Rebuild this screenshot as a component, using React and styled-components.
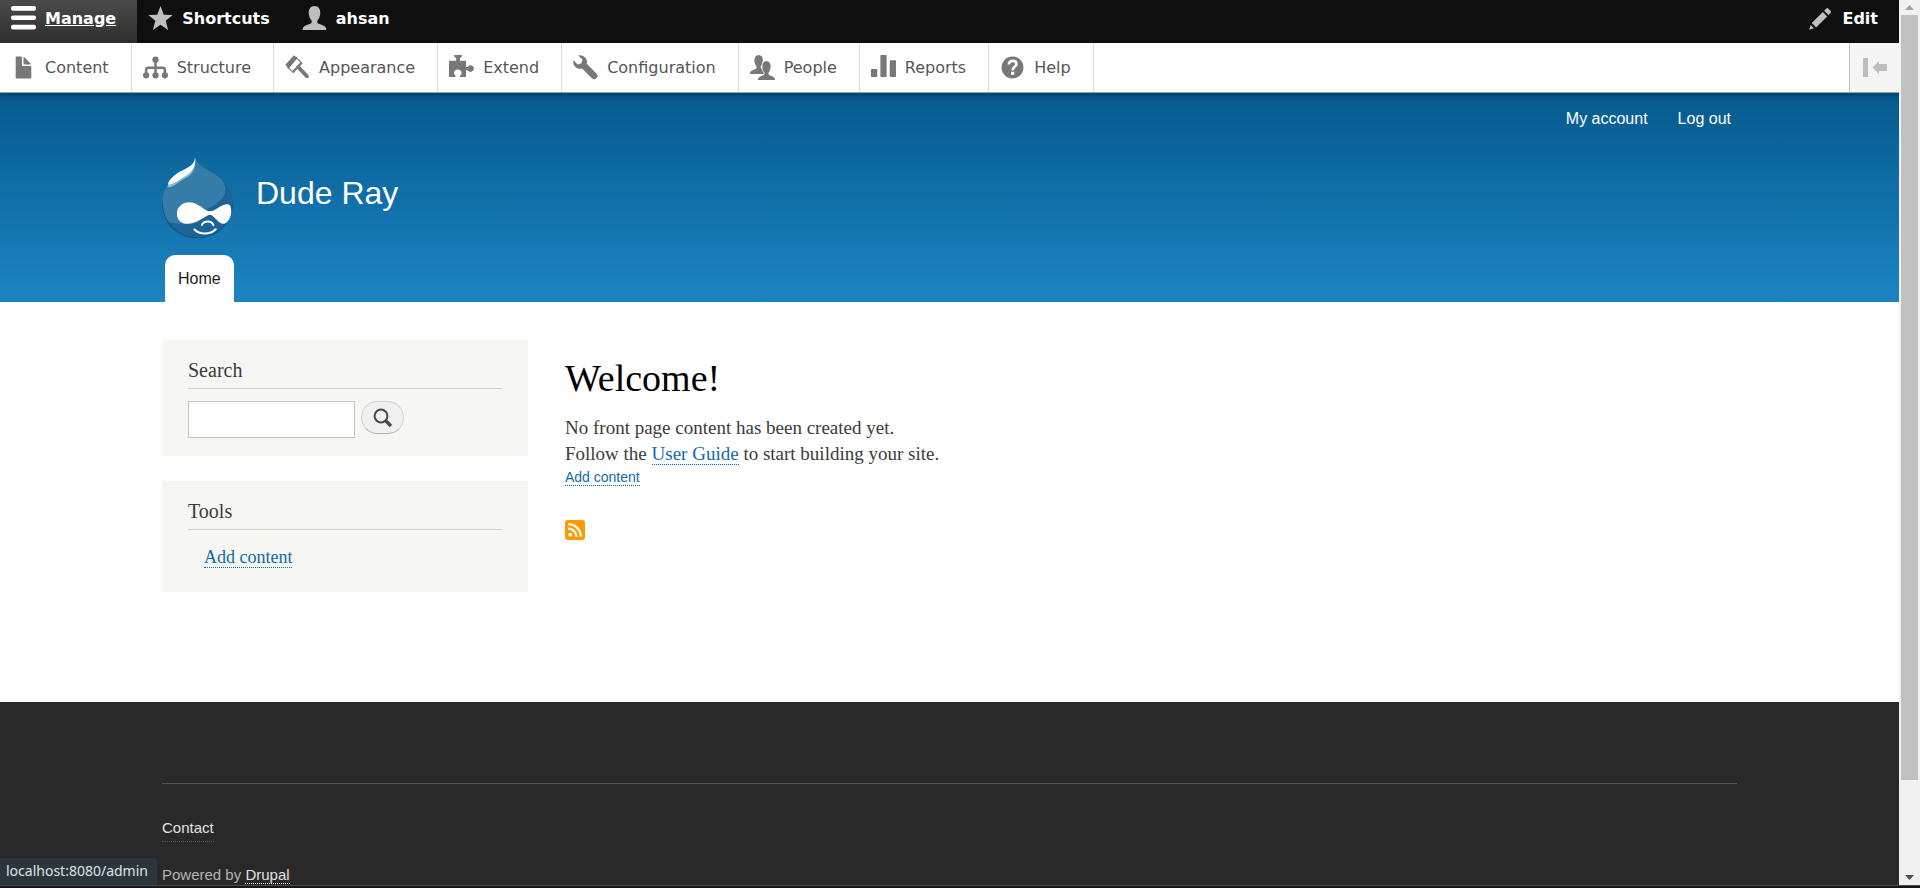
import React from "react";
import styled, { createGlobalStyle } from "styled-components";

const sans = `"Liberation Sans", Arial, sans-serif`;
const serif = `"Liberation Serif", Georgia, serif`;
const toolbarFont = `"DejaVu Sans", Verdana, sans-serif`;

const GlobalStyle = createGlobalStyle`
  *, *::before, *::after { box-sizing: border-box; }
  body { margin: 0; background: #fff; color: #3b3b3b; font-family: ${serif}; }
  h1, h2, p, ul { margin: 0; padding: 0; font-weight: normal; }
  ul { list-style: none; }
  a { text-decoration: none; }
  svg { display: block; flex: none; }
`;

/* Window frame */
const Shell = styled.div`
  display: flex;
  flex-direction: column;
  height: 100vh;
`;
const Viewport = styled.div`
  display: flex;
  flex: 1;
  min-height: 0;
`;
const Page = styled.div`
  display: flex;
  flex-direction: column;
  flex: 1;
  min-width: 0;
  overflow: hidden;
`;
const WindowEdge = styled.div`
  height: 3px;
  flex: none;
  border-top: 1px solid #4a4a4a;
  background: #1a1617;
`;
const Scrollbar = styled.div`
  display: flex;
  flex-direction: column;
  width: 21px;
  flex: none;
  padding: 0 2px;
  background: #f1f1f1;
`;
const ScrollButton = styled.button`
  display: grid;
  place-items: center;
  height: 15px;
  padding: 0;
  border: 0;
  background: none;
  color: ${(p) => p.$color};
`;
const ScrollTrack = styled.div`
  display: flex;
  flex-direction: column;
  flex: 1;
`;
const ScrollThumb = styled.div`
  flex: 17;
  background: #c1c1c1;
`;
const ScrollRest = styled.div`
  flex: 2;
`;
const StatusBar = styled.div`
  position: fixed;
  left: 0;
  bottom: 3px;
  height: 27px;
  padding: 0 9px 0 6px;
  border-top-right-radius: 4px;
  background: #2b363c;
  color: #dfe3e5;
  font: 14px/26px "Noto Sans", "Open Sans", sans-serif;
`;

/* Admin toolbar */
const TopBar = styled.nav`
  display: flex;
  flex: none;
  height: 43px;
  background: #0f0f0f;
`;
const ToolbarLink = styled.a`
  display: flex;
  align-items: center;
  gap: 9px;
  padding: 0 21px 0 11px;
  font-family: ${toolbarFont};
  font-size: 16px;
  line-height: 24px;
`;
const TopTab = styled(ToolbarLink)`
  padding-bottom: 6px;
  margin-left: ${(p) => (p.$end ? "auto" : "0")};
  color: ${(p) => (p.$active ? "#fff" : "#bebebe")};
  background: ${(p) => (p.$active ? "linear-gradient(#4b4b4b, #2e2e2e)" : "none")};
  span {
    color: #fff;
    font-weight: bold;
    text-decoration: ${(p) => (p.$active ? "underline" : "none")};
  }
`;
const Tray = styled.nav`
  position: relative;
  z-index: 1;
  display: flex;
  flex: none;
  height: 50px;
  border-bottom: 1px solid #8fa9b6;
  background: #fff;
  box-shadow: 0 0 6px 2px rgba(0, 0, 0, 0.34);
  clip-path: inset(0 0 -10px 0);
`;
const TrayList = styled.ul`
  display: flex;
  flex: 1;
`;
const TrayItem = styled.li`
  display: flex;
  border-right: 1px solid #dcdcdc;
`;
const TrayLink = styled(ToolbarLink)`
  padding-right: 22px;
  color: #787878;
  span { color: #565656; }
`;
const OrientationButton = styled.button`
  display: grid;
  place-items: center;
  width: 50px;
  padding: 0;
  border: 0;
  border-left: 1px solid #c4c4c4;
  background: #f5f5f5;
  color: #bebebe;
`;

/* Site header */
const Container = styled.div`
  width: 100%;
  max-width: 1613px;
  margin: 0 auto;
  padding: 0 19px;
`;
const Header = styled.header`
  flex: none;
  background: linear-gradient(#055a8e, #1d84c3);
  font-family: ${sans};
`;
const AccountMenu = styled.nav`
  display: flex;
  justify-content: flex-end;
  gap: 30px;
  padding: 16px 6px 0 0;
  font-size: 16px;
  line-height: 20px;
  a { color: #fff; }
`;
const Branding = styled.a`
  display: flex;
  gap: 23px;
  margin-top: 28px;
  color: #fff;
  font-size: 32px;
  line-height: 72px;
`;
const MainMenu = styled.nav`
  display: flex;
  margin-top: 16px;
  padding-left: 3px;
`;
const MenuTab = styled.a`
  padding: 0 13px;
  border-radius: 10px 10px 0 0;
  background: #fff;
  color: #1c1c1c;
  font-size: 16px;
  line-height: 47px;
`;

/* Body */
const Columns = styled(Container)`
  display: flex;
  flex: none;
  gap: 37px;
  padding-top: 38px;
  padding-bottom: 110px;
`;
const Sidebar = styled.aside`
  display: flex;
  flex-direction: column;
  gap: 25px;
  flex: 0 0 366px;
`;
const Block = styled.section`
  padding: 18px 26px;
  background: #f6f6f2;
`;
const BlockTitle = styled.h2`
  margin-bottom: 12px;
  padding-bottom: 6px;
  border-bottom: 1px solid #d3d3cf;
  font-size: 20px;
  line-height: 24px;
`;
const SearchForm = styled.form`
  display: flex;
  align-items: flex-start;
  gap: 6px;
`;
const SearchInput = styled.input`
  width: 167px;
  height: 37px;
  padding: 2px 6px;
  border: 1px solid #c4c4c0;
  background: #fff;
  font: 16px ${sans};
`;
const SearchButton = styled.button`
  display: grid;
  place-items: center;
  width: 43px;
  height: 33px;
  padding: 0;
  border: 1px solid #d4d4d4;
  border-bottom-color: #b4b4b4;
  border-radius: 17px;
  background: #f0f0f0;
  color: #484848;
`;
const ToolList = styled.ul`
  padding: 3px 16px 5px;
  font-size: 18px;
  line-height: 24px;
`;
const Link = styled.a`
  border-bottom: 1px dotted #0071b3;
  color: #0f6ca8;
`;
const Content = styled.main`
  flex: 1;
  min-width: 0;
  padding-top: 16px;
  font-size: 19px;
  line-height: 26px;
`;
const PageTitle = styled.h1`
  margin-bottom: 14px;
  color: #000;
  font-size: 38px;
  line-height: 45px;
`;
const ActionLinks = styled.ul`
  font-family: ${sans};
  font-size: 14px;
  line-height: 20px;
`;
const FeedLink = styled.a`
  display: inline-block;
  margin-top: 33px;
`;

/* Footer */
const Footer = styled.footer`
  flex: 1 0 auto;
  padding-top: 81px;
  background: #292929;
  color: #b4b4b4;
  font-family: ${sans};
  font-size: 15px;
  line-height: 20px;
`;
const FooterInner = styled.div`
  display: flex;
  flex-direction: column;
  align-items: flex-start;
  gap: 23px;
  padding-top: 34px;
  border-top: 1px solid #555;
`;
const FooterLink = styled.a`
  border-bottom: 1px dotted ${(p) => (p.$faint ? "#555" : "#fff")};
  padding-bottom: ${(p) => (p.$faint ? "3px" : "0")};
  color: #e2e2e2;
`;

/* Icons share a 16-unit grid and take the colour of their link */
const Icon = ({ children }) => (
  <svg width="25" height="25" viewBox="0 0 16 16" fill="currentColor" aria-hidden="true">
    {children}
  </svg>
);
const personShape =
  "M8 0C10.4 0 11.7 1.8 11.7 4.3C11.7 6.4 10.9 8.1 9.9 9.2C9.6 10.2 9.8 11 10.7 11.4C13 12.2 15.5 12.7 15.6 15.3H.4C.5 12.7 3 12.2 5.3 11.4C6.2 11 6.4 10.2 6.1 9.2C5.1 8.1 4.3 6.4 4.3 4.3C4.3 1.8 5.6 0 8 0Z";

const Hamburger = () => (
  <Icon>
    <rect width="16" height="3" rx="1.25" />
    <rect y="6" width="16" height="3" rx="1.25" />
    <rect y="12" width="16" height="3" rx="1.25" />
  </Icon>
);
const Star = () => (
  <Icon>
    <path d="M8 0L10.1 5.6L15.8 5.8L11.3 9.4L12.9 15.3L8 12L3.1 15.3L4.7 9.4L.2 5.8L5.9 5.6Z" />
  </Icon>
);
const Person = () => (
  <Icon>
    <path d={personShape} />
  </Icon>
);
const Pencil = () => (
  <Icon>
    <path d="M.8 15.2L1.7 12.2L3.8 14.3ZM2.4 10.9L9.5 3.8L12.3 6.7L5.2 13.8ZM10.3 3L11.6 1.7Q12.3 1 13.1 1.7L14.4 3Q15.1 3.8 14.4 4.5L13.1 5.8Z" />
  </Icon>
);
const File = () => (
  <Icon>
    <path d="M12.502 7h-5c-.276 0-.502-.225-.502-.5v-5c0-.275-.225-.5-.5-.5h-3c-.276 0-.5.225-.5.5v13.029c0 .275.225.5.5.5h9.002c.275 0 .498-.225.498-.5v-7.029c0-.275-.225-.5-.498-.5zM8.502 6h4c.275 0 .34-.159.146-.354l-4.293-4.292c-.195-.195-.353-.129-.353.146v4c0 .275.225.5.5.5z" />
  </Icon>
);
const OrgChart = () => (
  <Icon>
    <circle cx="8" cy="3" r="2" />
    <circle cx="2" cy="13" r="2" />
    <circle cx="8" cy="13" r="2" />
    <circle cx="14" cy="13" r="2" />
    <path d="M8 3V13M2 13V9.6Q2 8.2 3.4 8.2H12.6Q14 8.2 14 9.6V13" fill="none" stroke="currentColor" strokeWidth="1.6" />
  </Icon>
);
const Paintbrush = () => (
  <Icon>
    <path d="M.2 6.3L5.8 .1L7.9 2L2.4 8.6Z" />
    <path d="M7.2 1.7L10.8 5.3L5.3 11.2L1.8 8Z" fill="none" stroke="currentColor" strokeWidth=".7" />
    <path d="M11 5.2L5.3 11.4L4.5 10.5L10 4.4Z" />
    <path d="M8.5 7.8L14 13.6" fill="none" stroke="currentColor" strokeWidth="2.5" strokeLinecap="round" />
  </Icon>
);
const Puzzle = () => (
  <Icon>
    <path d="M3.3 0H8.2V1L7 2V3.6H10.9V7.6H12.1C12.5 6.9 13 6.6 13.7 6.6C15 6.6 15.9 7.5 15.9 8.7C15.9 9.9 15 10.8 13.7 10.8C13 10.8 12.5 10.5 12.1 9.8H10.9V14H7V13.2C7.7 12.8 8 12.2 8 11.5C8 10.2 7 9.2 5.6 9.2C4.2 9.2 3.2 10.2 3.2 11.5C3.2 12.2 3.6 12.8 4.2 13.2V14H0V3.6H4.6V2L3.3 1Z" />
  </Icon>
);
const Wrench = () => (
  <Icon>
    <path d="M.3 3.3L3 6L5.4 5.3L6.1 3L3.4 .3C6.6 -.5 9.6 2.2 8.8 5.6L15 11.8A2 2 0 0 1 12.1 14.8L5.8 8.6C2.4 9.4-.5 6.6 .3 3.3Z" />
  </Icon>
);
const People = () => (
  <Icon>
    <path d={personShape} transform="scale(.74 .79) translate(-.5 0)" />
    <path d={personShape} transform="translate(4.8 3.9) scale(.72 .79)" stroke="#fff" strokeWidth="1.4" paintOrder="stroke" />
  </Icon>
);
const BarChart = () => (
  <Icon>
    <rect y="9" width="4" height="5" rx=".4" />
    <rect x="6" width="4" height="14" rx=".4" />
    <rect x="12" y="3.4" width="4" height="10.6" rx=".4" />
  </Icon>
);
const Question = () => (
  <Icon>
    <circle cx="8" cy="8" r="7" />
    <path d="M5.7 6.1C5.7 4.5 6.7 3.8 8.1 3.8C9.6 3.8 10.5 4.6 10.5 5.8C10.5 7.5 8.1 7.6 8.1 9.7" fill="none" stroke="#fff" strokeWidth="1.7" />
    <rect x="7.1" y="10.7" width="2" height="2" fill="#fff" />
  </Icon>
);
const CollapseArrow = () => (
  <svg width="24" height="19" viewBox="0 0 24 19" fill="currentColor" aria-hidden="true">
    <path d="M0 0H5V19H0ZM9.5 9.5L16 3V6H24V13H16V16Z" />
  </svg>
);
const SearchGlyph = () => (
  <svg width="20" height="20" viewBox="0 0 20 20" fill="none" stroke="currentColor" aria-hidden="true">
    <circle cx="8" cy="8" r="6.4" strokeWidth="2" />
    <path d="M12.5 12.5L18 18" strokeWidth="3.4" />
  </svg>
);
const FeedGlyph = () => (
  <svg width="20" height="20" viewBox="0 0 20 20" fill="none" stroke="#fff" strokeWidth="2.2" aria-hidden="true">
    <rect width="20" height="20" rx="3" fill="#ff9900" stroke="none" />
    <circle cx="5.3" cy="14.8" r="2" fill="#fff" stroke="none" />
    <path d="M3.2 8.6A8 8 0 0 1 11.4 16.8M3.2 4.2A12.5 12.5 0 0 1 15.8 16.8" />
  </svg>
);
const Triangle = ({ down }) => (
  <svg width="9" height="5" viewBox="0 0 9 5" fill="currentColor" aria-hidden="true">
    <path d={down ? "M0 0H9L4.5 5Z" : "M0 5H9L4.5 0Z"} />
  </svg>
);
const Logo = () => (
  <svg width="71" height="82" viewBox="0 0 210 243" role="img" aria-label="Home">
    <defs>
      <clipPath id="drop">
        <path d="M98 0C104 25 130 33 150 46C188 70 210 98 210 137C210 198 163 241 105 241C45 241 0 197 0 137C0 102 18 74 48 50C68 36 97 28 98 0Z" />
      </clipPath>
    </defs>
    <g clipPath="url(#drop)">
      <rect width="210" height="243" fill="#1a6496" />
      <path d="M98 0C104 25 130 33 150 46C172 60 187 72 187 97C187 125 160 142 125 158L60 198C35 198 15 195 5 180L0 137V50L60 0Z" fill="#357ca9" />
      <path d="M0 130C0 197 45 240 105 240C163 240 209 198 209 137" fill="none" stroke="#135686" strokeWidth="4" />
      <path d="M98 0C101 34 92 51 70 62C48 72 36 90 17 90L15 70L90 10Z" fill="#8db9d4" />
    </g>
    <path d="M98 2C99 26 92 38 76 52C54 66 34 81 20 82C14 76 26 62 45 48C68 34 96 28 98 2Z" fill="#fff" />
    <path d="M44 168C44 148 60 134 82 134C108 134 125 161 143 161C158 161 174 140 194 140C204 140 205 152 205 164C203 184 192 198 182 198C166 198 156 173 142 171C128 173 105 198 75 198C57 198 44 187 44 168Z" fill="#fff" />
    <path d="M118 201C124 188 147 187 152 202" fill="none" stroke="#fff" strokeWidth="6" strokeLinecap="round" />
    <path d="M96 215C112 231 142 231 159 214" fill="none" stroke="#fff" strokeWidth="6" strokeLinecap="round" />
  </svg>
);

const trayItems = [
  ["Content", File],
  ["Structure", OrgChart],
  ["Appearance", Paintbrush],
  ["Extend", Puzzle],
  ["Configuration", Wrench],
  ["People", People],
  ["Reports", BarChart],
  ["Help", Question],
];

export default function App() {
  return (
    <Shell>
      <GlobalStyle />
      <Viewport>
        <Page>
          <TopBar aria-label="Administration">
            <TopTab href="#manage" $active><Hamburger /><span>Manage</span></TopTab>
            <TopTab href="#shortcuts"><Star /><span>Shortcuts</span></TopTab>
            <TopTab href="#user"><Person /><span>ahsan</span></TopTab>
            <TopTab href="#edit" $end><Pencil /><span>Edit</span></TopTab>
          </TopBar>
          <Tray aria-label="Manage">
            <TrayList>
              {trayItems.map(([label, Glyph]) => (
                <TrayItem key={label}>
                  <TrayLink href={`#${label.toLowerCase()}`}><Glyph /><span>{label}</span></TrayLink>
                </TrayItem>
              ))}
            </TrayList>
            <OrientationButton type="button" aria-label="Vertical orientation"><CollapseArrow /></OrientationButton>
          </Tray>

          <Header>
            <Container>
              <AccountMenu aria-label="User account menu">
                <a href="#account">My account</a>
                <a href="#logout">Log out</a>
              </AccountMenu>
              <Branding href="#home"><Logo />Dude Ray</Branding>
              <MainMenu aria-label="Main navigation">
                <MenuTab href="#home">Home</MenuTab>
              </MainMenu>
            </Container>
          </Header>

          <Columns>
            <Sidebar>
              <Block>
                <BlockTitle>Search</BlockTitle>
                <SearchForm role="search">
                  <SearchInput type="search" aria-label="Search" />
                  <SearchButton type="button" aria-label="Submit search"><SearchGlyph /></SearchButton>
                </SearchForm>
              </Block>
              <Block>
                <BlockTitle>Tools</BlockTitle>
                <ToolList>
                  <li><Link href="#add">Add content</Link></li>
                </ToolList>
              </Block>
            </Sidebar>
            <Content>
              <PageTitle>Welcome!</PageTitle>
              <p>No front page content has been created yet.</p>
              <p>Follow the <Link href="#guide">User Guide</Link> to start building your site.</p>
              <ActionLinks>
                <li><Link href="#add">Add content</Link></li>
              </ActionLinks>
              <FeedLink href="#feed" aria-label="Subscribe to feed"><FeedGlyph /></FeedLink>
            </Content>
          </Columns>

          <Footer>
            <Container>
              <FooterInner>
                <FooterLink href="#contact" $faint>Contact</FooterLink>
                <p>Powered by <FooterLink href="#drupal">Drupal</FooterLink></p>
              </FooterInner>
            </Container>
          </Footer>
        </Page>
        <Scrollbar aria-hidden="true">
          <ScrollButton type="button" tabIndex={-1} $color="#a3a3a3"><Triangle /></ScrollButton>
          <ScrollTrack><ScrollThumb /><ScrollRest /></ScrollTrack>
          <ScrollButton type="button" tabIndex={-1} $color="#505050"><Triangle down /></ScrollButton>
        </Scrollbar>
      </Viewport>
      <WindowEdge />
      <StatusBar>localhost:8080/admin</StatusBar>
    </Shell>
  );
}
